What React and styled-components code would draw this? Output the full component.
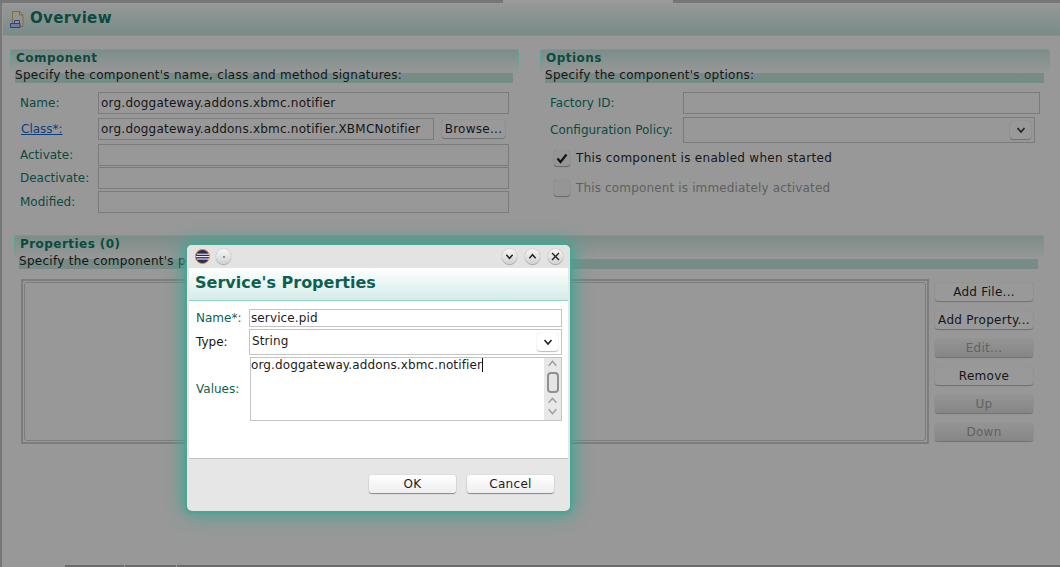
import React from "react";
import styled, { createGlobalStyle } from "styled-components";

const Global = createGlobalStyle`
  html, body { margin: 0; padding: 0; background: #979797; }
  * { box-sizing: border-box; }
`;

const Screen = styled.div`
  position: relative; width: 1060px; height: 567px; overflow: hidden;
  background: #989898; font: 12px/16px "DejaVu Sans", sans-serif; color: #161616; letter-spacing: .28px;
  border-left: 2px solid #777;
`;
const TopEdge = styled.div`
  height: 3px;
  background: linear-gradient(90deg, #777 0 501px, #9a9a9a 501px 671px, #777 671px);
`;
const PageHeader = styled.header`
  height: 33px; margin-left: 1px; padding: 5px 0 0 7px; display: flex; gap: 6px; align-items: flex-start;
  background: linear-gradient(#989898, #788c87); border-bottom: 1px solid #5fa596;
`;
const PageTitle = styled.h1`
  margin: 0; font: bold 15px/20px "DejaVu Sans", sans-serif; color: #0b4a40; letter-spacing: .35px;
`;
const TopGrid = styled.div`
  display: grid; grid-template-columns: 509px 510px; column-gap: 21px; padding: 13px 0 0 8px;
`;
const Section = styled.section`
  height: 186px;
`;
const SectionBar = styled.div`
  position: relative; height: 24px; padding: 1px 0 0 6px;
  background: linear-gradient(#7a8d88, #989898); border-radius: 3px 3px 0 0;
  &::before {
    content: ""; position: absolute; inset: 0; border: 1px solid #5fa596; border-bottom: 0; border-radius: 3px 3px 0 0;
    mask-image: linear-gradient(#000 40%, transparent);
  }
`;
const SectionTitle = styled.h2`
  margin: 0; font: bold 12px/16px "DejaVu Sans", sans-serif; color: #0b4a40; letter-spacing: .45px;
`;
const SectionDesc = styled.p`
  position: relative; margin: 0 6px 0 5px; height: 10px; line-height: 4px; background: #778c87; white-space: nowrap;
`;
const Fields = styled.div`
  display: grid; row-gap: 1px; padding: 9px 0 0 10px;
`;
const FieldRow = styled.div`
  display: grid; grid-template-columns: ${p => p.$label}px 1fr auto; align-items: center; height: ${p => p.$h || 22}px;
  margin-top: ${p => p.$mt || 0}px;
`;
const FieldLabel = styled.label`
  color: #0b4a40; white-space: nowrap; letter-spacing: 0;
`;
const LinkLabel = styled.a`
  color: #0c3f7a; text-decoration: underline; margin-left: 1px; letter-spacing: 0;
`;
const TextBox = styled.div`
  height: ${p => p.$h || 22}px; border: 1px solid #7b7b7b; padding: 0 2px; line-height: 20px; white-space: nowrap;
  margin-right: ${p => p.$mr || 0}px; position: relative; letter-spacing: .22px;
`;
const SmallButton = styled.button`
  width: ${p => p.$w || 63}px; height: 18px; padding: 0; border: 0; border-radius: 3px; margin-right: ${p => p.$mr || 0}px;
  font: 12px/18px "DejaVu Sans", sans-serif; letter-spacing: .28px; color: ${p => (p.$off ? "#626262" : "#161616")};
  background: ${p => (p.$off ? "linear-gradient(#949494, #868686)" : "#999")};
  box-shadow: 0 1px 1px #707070, 0 0 1px #7a7a7a;
`;
const ComboArrow = styled.span`
  position: absolute; right: 3px; top: 3px; width: 21px; height: 18px; border-radius: 3px;
  display: flex; align-items: center; justify-content: center;
  background: ${p => (p.$light ? "#fff" : "#999")}; box-shadow: 0 1px 1px ${p => (p.$light ? "#bbb" : "#707070")}, 0 0 1px ${p => (p.$light ? "#ccc" : "#7a7a7a")};
`;
const CheckRow = styled.div`
  display: flex; align-items: center; gap: 6px; height: 18px; margin: ${p => p.$mt}px 0 0 4px;
  color: ${p => (p.$off ? "#5f5f5f" : "#161616")}; letter-spacing: ${p => (p.$off ? ".15px" : ".3px")};
`;
const CheckBox = styled.span`
  width: 16px; height: 16px; border-radius: 3px; background: #959595; display: flex; align-items: center; justify-content: center;
  box-shadow: 0 1px 1px #666, 0 0 1px #777;
`;
const PropsSection = styled.section`
  margin: 0 0 0 12px; width: 1030px;
`;
const PropsBody = styled.div`
  display: flex; margin: 10px 0 0 7px; gap: 6px;
`;
const TableFrame = styled.div`
  width: 908px; height: 165px; border: 2px solid #7d7d7d; padding: 1px;
`;
const TableInner = styled.div`
  height: 100%; border: 1px solid #7d7d7d; border-radius: 3px;
`;
const SideButtons = styled.div`
  display: flex; flex-direction: column; gap: 10px; padding-top: 4px;
`;
const Tabs = styled.div`
  position: absolute; left: 63px; right: 0; bottom: 0; height: 2px; background: #6a6a6a; display: flex;
`;
const TabCell = styled.span`
  width: ${p => p.$w}px; height: 2px; border-right: 1px solid #999;
`;

const Dialog = styled.div`
  position: absolute; left: 185px; top: 245px; width: 383px; height: 266px; border-radius: 5px; background: #e6e6e6;
  box-shadow: 0 0 3px 2px #4aa593, 0 0 18px 4px #3fa692;
  display: flex; flex-direction: column;
`;
const TitleBar = styled.div`
  height: 23px; display: flex; align-items: center; padding: 0 7px 0 8px; background: #e3e3e3; border-radius: 5px 5px 0 0; gap: 6px;
`;
const Spacer = styled.div` flex: 1; `;
const WinButtons = styled.div` display: flex; gap: 8px; `;
const RoundBtn = styled.span`
  width: 15px; height: 15px; border-radius: 50%; display: flex; align-items: center; justify-content: center;
  background: linear-gradient(#f6f6f6, #d2d2d2); box-shadow: 0 0 1px #888, 0 1px 1px #aaa;
`;
const Dot = styled.span`
  width: 2px; height: 2px; border-radius: 50%; background: #777;
`;
const DialogBody = styled.div`
  flex: 1; margin: 0 2px; background: #fff; border-bottom: 1px solid #c4c4c4; display: flex; flex-direction: column;
`;
const Banner = styled.div`
  height: 33px; padding: 5px 0 0 6px; background: linear-gradient(#fff, #d3ece7); border-bottom: 1px solid #8ed3c4;
`;
const BannerTitle = styled.h2`
  margin: 0; font: bold 16px/20px "DejaVu Sans", sans-serif; color: #0f5f50; letter-spacing: 0;
`;
const DialogFields = styled.div`
  padding: 8px 6px 0 7px; display: flex; flex-direction: column; gap: 2px;
`;
const DRow = styled.div`
  display: grid; grid-template-columns: 53px 1fr; align-items: center; height: ${p => p.$h}px;
`;
const DLabel = styled.label` color: ${p => (p.$plain ? "#161616" : "#0f5f50")}; letter-spacing: 0; `;
const DBox = styled.div`
  height: ${p => p.$h}px; border: 1px solid #c4c4c4; padding: 0 ${p => p.$px ?? 1}px; line-height: ${p => p.$lh || p.$h - 2}px; position: relative; color: #1c1c1c;
  margin-left: ${p => p.$ml || 0}px; white-space: nowrap; letter-spacing: .12px;
`;
const Caret = styled.span`
  display: inline-block; width: 1px; height: 14px; background: #111; vertical-align: -3px;
`;
const ScrollTrack = styled.div`
  position: absolute; right: 0; top: 0; bottom: 0; width: 17px; background: #e8e8e8; display: flex; flex-direction: column; align-items: center;
`;
const ScrollThumb = styled.div`
  width: 12px; height: 21px; border: 2px solid #909090; border-radius: 4px; background: #e4e4e4; margin: 3px 0 2px;
`;
const Footer = styled.div`
  height: 52px; display: flex; justify-content: flex-end; gap: 11px; padding: 16px 16px 0 0;
`;
const DialogButton = styled.button`
  width: 87px; height: 18px; padding: 0; border: 0; border-radius: 3px; background: linear-gradient(#fff, #eee); color: #1c1c1c;
  font: 12px/18px "DejaVu Sans", sans-serif; letter-spacing: .3px; box-shadow: 0 1px 1px #888, 0 0 1px #999;
`;

const Chevron = ({ up, color = "#222", size = 10, sw = 1.6 }) => (
  <svg width={size} height={size} viewBox="0 0 10 10" fill="none" stroke={color} strokeWidth={sw}>
    <path d={up ? "M1.5 7 L5 3 L8.5 7" : "M1.5 3 L5 7 L8.5 3"} />
  </svg>
);

const PageIcon = () => (
  <svg width="14" height="17" viewBox="0 0 14 17" style={{ marginTop: 3 }}>
    <path d="M2.5 .5H9.5L13 4V15.5H2.5Z" fill="#94948e" stroke="#7f6d3d" />
    <path d="M9.5 .5V4H13" fill="none" stroke="#7f6d3d" />
    <path d="M4.5 12V9.5H9.5V13" fill="none" stroke="#2e3f86" />
    <path d="M.5 12.5H10V16.5H.5Z" fill="#6d7ba3" stroke="#2e3f86" />
  </svg>
);

const EclipseIcon = () => (
  <svg width="15" height="15" viewBox="0 0 15 15">
    <circle cx="7.5" cy="7.5" r="7" fill="#2a2a66" stroke="#e08a20" strokeWidth="1" />
    <path d="M2 5.2H14M1 7.6H14.5M2 10H14" stroke="#fff" strokeWidth="1" />
  </svg>
);

const Check = () => (
  <svg width="12" height="12" viewBox="0 0 12 12" fill="none" stroke="#111" strokeWidth="2.2">
    <path d="M1.5 6.5 L4.5 10 L10.5 2.5" />
  </svg>
);

const Close = () => (
  <svg width="9" height="9" viewBox="0 0 9 9" stroke="#222" strokeWidth="1.4"><path d="M1 1L8 8M8 1L1 8" /></svg>
);

export default function App() {
  return (
    <Screen>
      <Global />
      <TopEdge />
      <PageHeader>
        <PageIcon />
        <PageTitle>Overview</PageTitle>
      </PageHeader>
      <TopGrid>
        <Section>
          <SectionBar><SectionTitle>Component</SectionTitle></SectionBar>
          <SectionDesc>Specify the component's name, class and method signatures:</SectionDesc>
          <Fields>
            <FieldRow $label={78}><FieldLabel>Name:</FieldLabel><TextBox $mr={10}>org.doggateway.addons.xbmc.notifier</TextBox></FieldRow>
            <FieldRow $label={78} $mt={3}><LinkLabel>Class*:</LinkLabel><TextBox $mr={8}>org.doggateway.addons.xbmc.notifier.XBMCNotifier</TextBox><SmallButton $mr={14}>Browse...</SmallButton></FieldRow>
            <FieldRow $label={78} $mt={3}><FieldLabel>Activate:</FieldLabel><TextBox $mr={10} /></FieldRow>
            <FieldRow $label={78}><FieldLabel>Deactivate:</FieldLabel><TextBox $mr={10} /></FieldRow>
            <FieldRow $label={78} $mt={1}><FieldLabel>Modified:</FieldLabel><TextBox $mr={10} /></FieldRow>
          </Fields>
        </Section>
        <Section>
          <SectionBar><SectionTitle>Options</SectionTitle></SectionBar>
          <SectionDesc>Specify the component's options:</SectionDesc>
          <Fields>
            <FieldRow $label={133}><FieldLabel>Factory ID:</FieldLabel><TextBox $mr={10} /></FieldRow>
            <FieldRow $label={133} $h={26} $mt={2}><FieldLabel>Configuration Policy:</FieldLabel><TextBox $h={26} $mr={15}><ComboArrow><Chevron /></ComboArrow></TextBox></FieldRow>
            <CheckRow $mt={5}><CheckBox><Check /></CheckBox>This component is enabled when started</CheckRow>
            <CheckRow $mt={11} $off><CheckBox />This component is immediately activated</CheckRow>
          </Fields>
        </Section>
      </TopGrid>
      <PropsSection>
        <SectionBar><SectionTitle>Properties (0)</SectionTitle></SectionBar>
        <SectionDesc>Specify the component's properties:</SectionDesc>
        <PropsBody>
          <TableFrame><TableInner /></TableFrame>
          <SideButtons>
            <SmallButton $w={98}>Add File...</SmallButton>
            <SmallButton $w={98}>Add Property...</SmallButton>
            <SmallButton $w={98} $off>Edit...</SmallButton>
            <SmallButton $w={98}>Remove</SmallButton>
            <SmallButton $w={98} $off>Up</SmallButton>
            <SmallButton $w={98} $off>Down</SmallButton>
          </SideButtons>
        </PropsBody>
      </PropsSection>
      <Tabs>
        <TabCell $w={60} />
        <TabCell $w={52} />
      </Tabs>
      <Dialog>
        <TitleBar>
          <EclipseIcon />
          <RoundBtn><Dot /></RoundBtn>
          <Spacer />
          <WinButtons>
            <RoundBtn><Chevron size={9} /></RoundBtn>
            <RoundBtn><Chevron size={9} up /></RoundBtn>
            <RoundBtn><Close /></RoundBtn>
          </WinButtons>
        </TitleBar>
        <DialogBody>
          <Banner><BannerTitle>Service's Properties</BannerTitle></Banner>
          <DialogFields>
            <DRow $h={18}><DLabel>Name*:</DLabel><DBox $h={18}>service.pid</DBox></DRow>
            <DRow $h={26}><DLabel $plain>Type:</DLabel><DBox $h={26} $px={2} $lh={22}>String<ComboArrow $light><Chevron /></ComboArrow></DBox></DRow>
            <DRow $h={64}><DLabel>Values:</DLabel>
              <DBox $h={64} $ml={1} $px={0} $lh={15}>
                org.doggateway.addons.xbmc.notifier<Caret />
                <ScrollTrack>
                  <Chevron up color="#999" size={11} sw={1.2} />
                  <ScrollThumb />
                  <Chevron up color="#999" size={11} sw={1.2} />
                  <Chevron color="#999" size={11} sw={1.2} />
                </ScrollTrack>
              </DBox>
            </DRow>
          </DialogFields>
        </DialogBody>
        <Footer>
          <DialogButton>OK</DialogButton>
          <DialogButton>Cancel</DialogButton>
        </Footer>
      </Dialog>
    </Screen>
  );
}
